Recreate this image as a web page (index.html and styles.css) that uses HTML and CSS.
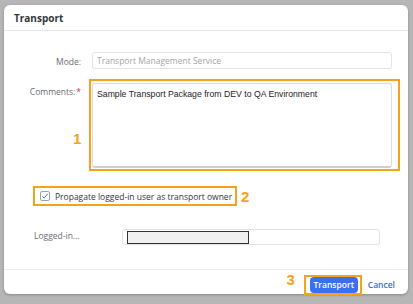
FILE: index.html
```html
<!DOCTYPE html>
<html>
<head>
<meta charset="utf-8">
<link rel="stylesheet" href="styles.css">
</head>
<body>
<div class="dialog">
  <div class="header">Transport</div>
  <div class="content">
    <div class="row mode-row">
      <div class="label">Mode:</div>
      <div class="input disabled">Transport Management Service</div>
    </div>
    <div class="row comments-row">
      <div class="label">Comments:<span class="req">*</span></div>
      <div class="hl hl-comments">
        <div class="textarea">Sample Transport Package from DEV to QA Environment</div>
      </div>
      <span class="num num1">1</span>
    </div>
    <div class="check-row">
      <div class="hl hl-check">
        <span class="checkbox"><svg width="8" height="8" viewBox="0 0 8 8"><path d="M1.3 4.2 L3.2 6 L6.8 1.8" fill="none" stroke="#4b72c9" stroke-width="1"/></svg></span>
        <span class="check-text">Propagate logged-in user as transport owner</span>
      </div>
      <span class="num num2">2</span>
    </div>
    <div class="logged-row">
      <div class="logged-label">Logged-in...</div>
      <div class="input logged-input"><span class="redact"></span></div>
    </div>
  </div>
  <div class="footer">
    <span class="num num3">3</span>
    <div class="hl hl-btn"><button class="btn-primary">Transport</button></div>
    <button class="btn-cancel">Cancel</button>
  </div>
</div>
</body>
</html>
```

FILE: styles.css
```css
* { box-sizing: border-box; }
html, body { margin: 0; padding: 0; }
body {
  width: 413px;
  height: 304px;
  background: #b6b6b6;
  overflow: hidden;
  padding: 5px 5px 0 4px;
  font-family: "Open Sans", "Liberation Sans", sans-serif;
}
.dialog {
  width: 404px;
  height: 289px;
  background: #fff;
  border-radius: 6px;
  display: flex;
  flex-direction: column;
  box-shadow: 0 1px 3px rgba(0,0,0,0.25);
}
.header {
  height: 26px;
  border-bottom: 1px solid #e6e6e6;
  padding-left: 10px;
  display: flex;
  align-items: center;
  font-weight: 700;
  font-size: 10px;
  color: #32363a;
}
.content {
  flex: 1;
  padding-top: 21px;
}
.row {
  display: flex;
  align-items: flex-start;
  position: relative;
}
.label {
  width: 77px;
  text-align: right;
  font-size: 8.5px;
  color: #6a6d70;
  flex: none;
}
.mode-row .label { padding-top: 4px; margin-right: 11px; }
.input {
  height: 17px;
  border: 1px solid #e3e3e3;
  border-radius: 3px;
  background: #fff;
  font-size: 8.5px;
  padding: 2px 4px;
}
.disabled { width: 300px; color: #a3a6a8; }
.comments-row { margin-top: 10px; }
.comments-row .label { padding-top: 7px; margin-right: 8px; }
.req { color: #c4305a; margin-left: 1px; }
.hl {
  border: 2px solid #f7a21b;
}
.hl-comments {
  width: 311px;
  height: 92px;
  padding: 2px 5px 1px 1px;
}
.textarea {
  width: 300px;
  height: 85px;
  border: 1px solid #dcdcdc;
  border-bottom: 2px solid #cfcfcf;
  border-radius: 3px;
  font-family: "Liberation Sans", Arial, sans-serif;
  font-size: 8.7px;
  color: #222;
  padding: 5px 4px;
}
.num {
  font-family: "Liberation Sans", Arial, sans-serif;
  font-weight: 700;
  font-size: 15px;
  color: #f7a21b;
  line-height: 1;
}
.num1 { position: absolute; left: 69px; top: 52px; }
.check-row {
  display: flex;
  align-items: center;
  margin-top: 15px;
  margin-left: 29px;
}
.hl-check {
  width: 204px;
  height: 20px;
  display: flex;
  align-items: center;
  padding-left: 5px;
}
.checkbox {
  width: 10px;
  height: 10px;
  border: 1px solid #9aa3ad;
  border-radius: 2px;
  display: flex;
  align-items: center;
  justify-content: center;
  margin-right: 5px;
}
.checkbox svg { display: block; }
.check-text {
  font-size: 8.5px;
  color: #32363a;
  white-space: nowrap;
}
.num2 { margin-left: 4px; }
.logged-row {
  display: flex;
  align-items: center;
  margin-top: 23px;
  margin-left: 30px;
}
.logged-label {
  width: 88px;
  font-size: 8.5px;
  color: #6a6d70;
  margin-top: -4px;
}
.logged-input {
  width: 258px;
  height: 16px;
  padding: 1px 4px;
}
.redact {
  display: block;
  width: 122px;
  height: 13px;
  background: #f0f0f0;
  border: 1px solid #333;
}
.footer {
  height: 25px;
  border-top: 1px solid #ececec;
  display: flex;
  align-items: center;
  justify-content: flex-end;
  padding-right: 13px;
}
.num3 { margin-right: 9px; margin-top: -6px; }
.hl-btn {
  width: 58px;
  height: 20px;
  display: flex;
  align-items: center;
  padding-left: 4px;
  margin-top: 5px;
}
.btn-primary {
  width: 48px;
  height: 16px;
  background: #3c6ff0;
  border: none;
  border-radius: 4px;
  color: #fff;
  font-family: "Open Sans", sans-serif;
  font-size: 8.5px;
  font-weight: 600;
  padding: 0;
}
.btn-cancel {
  background: none;
  border: none;
  color: #3d6bd6;
  font-family: "Open Sans", sans-serif;
  font-size: 8.5px;
  font-weight: 600;
  padding: 0 0 0 6px;
  margin-top: 5px;
}
```
